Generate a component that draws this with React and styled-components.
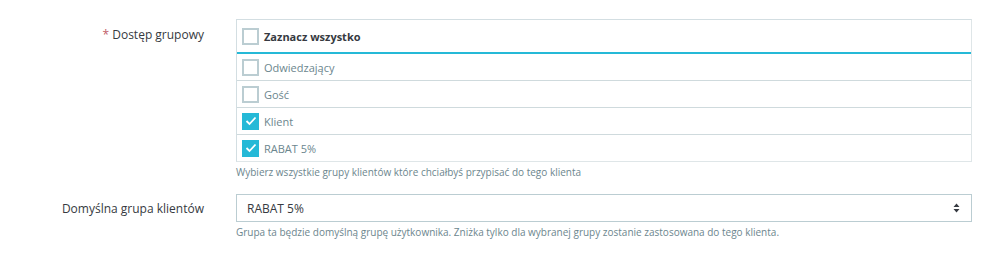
import React from 'react';
import styled, { createGlobalStyle } from 'styled-components';

const GlobalStyle = createGlobalStyle`
  body {
    margin: 0;
    background: #fff;
    font-family: "Open Sans", "Liberation Sans", sans-serif;
    font-size: 12px;
    color: #363a41;
  }
`;

const Form = styled.div`
  padding-top: 19px;
  display: flex;
  flex-direction: column;
  gap: 14px;
`;

const FormGroup = styled.div`
  display: grid;
  grid-template-columns: 204px 736px;
  column-gap: 32px;
  align-items: start;
`;

const Label = styled.label`
  text-align: right;
  font-size: 12px;
  color: #363a41;
  padding-top: ${(p) => p.$top || 7}px;
  line-height: 17px;
`;

const Required = styled.span`
  color: #c05c67;
  margin-right: 3px;
`;

const Table = styled.div`
  border: 1px solid #d3dee2;
  border-right-color: #dfe6e8;
  border-bottom-color: #dfe6e8;
`;

const Row = styled.div`
  display: flex;
  align-items: center;
  gap: 5px;
  padding: 0 5px;
  height: ${(p) => (p.$head ? 32 : 26)}px;
  border-bottom: ${(p) => (p.$head ? '2px solid #25b9d7' : '1px solid #cfdadd')};
  &:last-child {
    border-bottom: none;
  }
  font-size: 11px;
  font-weight: ${(p) => (p.$head ? 700 : 400)};
  color: ${(p) => (p.$head ? '#363a41' : '#6c868e')};
`;

const Box = styled.span`
  width: 17px;
  height: 17px;
  box-sizing: border-box;
  border: ${(p) => (p.$checked ? 'none' : '2px solid #bbcdd2')};
  background: ${(p) => (p.$checked ? '#25b9d7' : '#fff')};
  display: flex;
  align-items: center;
  justify-content: center;
  flex-shrink: 0;
`;

const Help = styled.p`
  margin: 3px 0 0;
  font-size: 10px;
  color: #6c868e;
  line-height: 15px;
`;

const Select = styled.div`
  height: 28px;
  box-sizing: border-box;
  border: 1px solid #bbcdd2;
  display: flex;
  align-items: center;
  justify-content: space-between;
  padding: 0 11px 0 10px;
  color: #363a41;
  font-size: 12px;
`;

const Check = () => (
  <svg width="12" height="10" viewBox="0 0 12 10">
    <path d="M1.5 5 L4.5 8 L10.5 1.5" fill="none" stroke="#fff" strokeWidth="1.8" />
  </svg>
);

const Arrows = () => (
  <svg width="7" height="10" viewBox="0 0 7 10">
    <path d="M3.5 0.5 L6.5 4 H0.5 Z M3.5 9.5 L6.5 6 H0.5 Z" fill="#363a41" />
  </svg>
);

const CheckRow = ({ label, checked, head }) => (
  <Row $head={head}>
    <Box $checked={checked}>{checked && <Check />}</Box>
    {label}
  </Row>
);

const groups = [
  { label: 'Odwiedzający', checked: false },
  { label: 'Gość', checked: false },
  { label: 'Klient', checked: true },
  { label: 'RABAT 5%', checked: true },
];

export default function App() {
  return (
    <>
      <GlobalStyle />
      <Form>
        <FormGroup>
          <Label $top={7}>
            <Required>*</Required>Dostęp grupowy
          </Label>
          <div>
            <Table>
              <CheckRow head label="Zaznacz wszystko" />
              {groups.map((g) => (
                <CheckRow key={g.label} {...g} />
              ))}
            </Table>
            <Help>Wybierz wszystkie grupy klientów które chciałbyś przypisać do tego klienta</Help>
          </div>
        </FormGroup>
        <FormGroup>
          <Label $top={6}>Domyślna grupa klientów</Label>
          <div>
            <Select>
              RABAT 5%
              <Arrows />
            </Select>
            <Help>
              Grupa ta będzie domyślną grupę użytkownika. Zniżka tylko dla wybranej grupy zostanie
              zastosowana do tego klienta.
            </Help>
          </div>
        </FormGroup>
      </Form>
    </>
  );
}
